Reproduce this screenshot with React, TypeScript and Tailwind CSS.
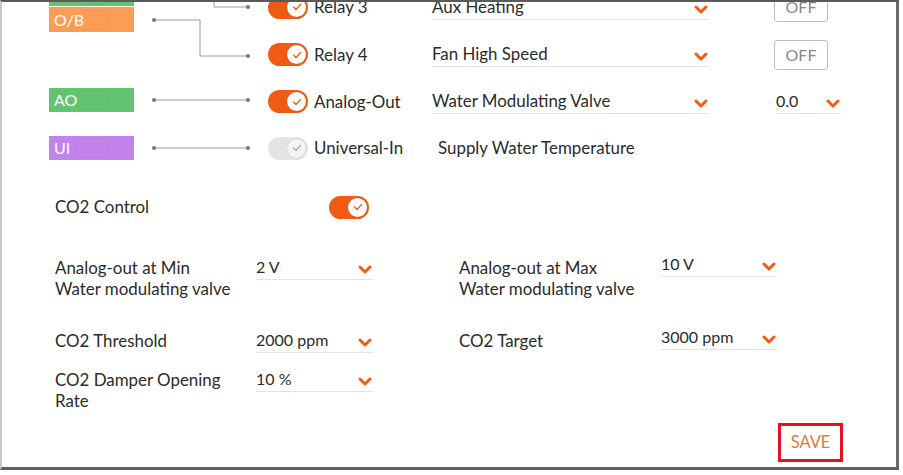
import { ReactNode } from 'react';

const ORANGE = '#f15a12';

function Chevron({ className = '' }: { className?: string }) {
  return (
    <svg width="14" height="9" viewBox="0 0 14 9" className={className}>
      <polyline points="2,2 7,7 12,2" fill="none" stroke="#ee5d14" strokeWidth="3" strokeLinecap="round" strokeLinejoin="round" />
    </svg>
  );
}

function Toggle({ on = true }: { on?: boolean }) {
  return (
    <div
      className={`flex items-center justify-end w-[40px] h-[23px] rounded-full pr-[2px] ${
        on ? 'bg-[#f15a12]' : 'bg-[#e4e4e4]'
      }`}
    >
      <div
        className={`flex items-center justify-center w-[19px] h-[19px] rounded-full ${
          on ? 'bg-white' : 'bg-[#f4f4f4]'
        } shadow-[0_0_1px_rgba(0,0,0,0.25)]`}
      >
        <svg width="10" height="8" viewBox="0 0 10 8">
          <polyline
            points="1.5,4 4,6.5 8.5,1.5"
            fill="none"
            stroke={on ? ORANGE : '#aaa'}
            strokeWidth="1.2"
            strokeLinecap="round"
            strokeLinejoin="round"
          />
        </svg>
      </div>
    </div>
  );
}

function Dropdown({ value, w, className = '' }: { value: string; w: string; className?: string }) {
  return (
    <div className={`flex items-center justify-between h-[25px] border-b-[1.5px] border-[#e2e2e2] ${w} ${className}`}>
      <span className="leading-[20px]">{value}</span>
      <Chevron className="mt-[5px] mr-[1px]" />
    </div>
  );
}

function Tag({ label, color, h, className = '' }: { label: string; color: string; h: string; className?: string }) {
  return (
    <div className={`relative flex items-center w-[85px] ${h} ${color} ${className} text-white text-[16px] pl-[5px]`}>
      <span>{label}</span>
      <div className="absolute left-[25px] top-1/2 -translate-y-1/2 w-[35px] h-[20px] rounded-full border border-black/5" />
    </div>
  );
}

function OffButton() {
  return (
    <div className="flex items-center justify-center w-[54px] h-[30px] border border-[#bdbdbd] rounded-[3px] text-[#888] text-[16px] ml-[65px]">
      OFF
    </div>
  );
}

function RelayRow({ h, label, children, on = true }: { h: string; label: string; children: ReactNode; on?: boolean }) {
  return (
    <div className={`flex items-center ${h}`}>
      <Toggle on={on} />
      <span className="ml-[6px] w-[118px]">{label}</span>
      {children}
    </div>
  );
}

function Connectors() {
  const dot = (x: number, y: number) => <circle cx={x} cy={y} r="2" fill="#777" />;
  return (
    <svg width="134" height="188" viewBox="0 0 134 188" className="shrink-0">
      <g fill="none" stroke="#9a9a9a" strokeWidth="1">
        <polyline points="80,0 80,24 114,24" />
        <polyline points="20,37 66,37 66,73 114,73" />
        <line x1="20" y1="117" x2="114" y2="117" />
        <line x1="20" y1="165" x2="114" y2="165" />
      </g>
      {dot(114, 24)}
      {dot(20, 37)}
      {dot(114, 73)}
      {dot(20, 117)}
      {dot(114, 117)}
      {dot(20, 165)}
      {dot(114, 165)}
    </svg>
  );
}

function FieldRow({ label, value, right, rightValue, labelTop }: { label: ReactNode; value: string; right: ReactNode; rightValue: string; labelTop: string }) {
  return (
    <div className={`flex items-start ${labelTop}`}>
      <div className="w-[201px] leading-[21px]">{label}</div>
      <Dropdown value={value} w="w-[117px] text-[16px]" className="mt-[-2px]" />
      <div className="w-[86px]" />
      <div className="w-[202px] leading-[21px]">{right}</div>
      <Dropdown value={rightValue} w="w-[116px] text-[16px]" className="mt-[-5px]" />
    </div>
  );
}

export default function App() {
  return (
    <div className="w-[903px] h-[475px] bg-white overflow-hidden" style={{ fontFamily: 'Lato, "Open Sans", sans-serif' }}>
      <div className="w-[899px] h-[470px] border-t-2 border-t-[#5a5a5a] border-l-2 border-l-[#c8c8c8] border-r-[3px] border-r-[#6a6a6a] border-b-[3px] border-b-[#5f5f5f] overflow-hidden flex flex-col text-[#2b2b2b] text-[16.9px]">
        {/* wiring section, scrolled partly out of view */}
        <div className="flex mt-[-19px]">
          <div className="flex flex-col ml-[47px] w-[85px]">
            <Tag label="Y1" color="bg-[#63c370]" h="h-[23px]" />
            <Tag label="O/B" color="bg-[#fd9d55]" h="h-[25px]" className="mt-[1px]" />
            <Tag label="AO" color="bg-[#63c370]" h="h-[24px]" className="mt-[56px]" />
            <Tag label="UI" color="bg-[#c284ea]" h="h-[24px]" className="mt-[24px]" />
          </div>
          <Connectors />
          <div className="flex flex-col">
            <RelayRow h="h-[48px]" label="Relay 3">
              <Dropdown value="Aux Heating" w="w-[277px]" />
              <OffButton />
            </RelayRow>
            <RelayRow h="h-[47px]" label="Relay 4">
              <Dropdown value="Fan High Speed" w="w-[277px]" />
              <OffButton />
            </RelayRow>
            <RelayRow h="h-[47px]" label="Analog-Out">
              <Dropdown value="Water Modulating Valve" w="w-[277px]" />
              <Dropdown value="0.0" w="w-[65px] text-[16px]" className="ml-[67px]" />
            </RelayRow>
            <RelayRow h="h-[46px]" label="Universal-In" on={false}>
              <span className="pl-[6px]">Supply Water Temperature</span>
            </RelayRow>
          </div>
        </div>

        {/* CO2 settings */}
        <div className="flex flex-col pl-[53px]">
          <div className="flex items-center h-[24px] mt-[24px]">
            <span className="w-[274px]">CO2 Control</span>
            <Toggle />
          </div>
          <FieldRow
            labelTop="mt-[38px]"
            label={<>Analog-out at Min<br />Water modulating valve</>}
            value="2 V"
            right={<>Analog-out at Max<br />Water modulating valve</>}
            rightValue="10 V"
          />
          <FieldRow labelTop="mt-[31px]" label="CO2 Threshold" value="2000 ppm" right="CO2 Target" rightValue="3000 ppm" />
          <div className="flex items-start mt-[16px]">
            <div className="w-[201px] leading-[21px]">CO2 Damper Opening<br />Rate</div>
            <Dropdown value="10 %" w="w-[117px] text-[16px]" className="mt-[-2px]" />
          </div>
        </div>

        <div className="flex justify-end mt-auto mb-[5px] mr-[53px]">
          <button className="w-[65px] h-[39px] border-[3px] border-[#e5131f] text-[#e27a3c] text-[16.5px] flex items-center justify-center">
            SAVE
          </button>
        </div>
      </div>
    </div>
  );
}
